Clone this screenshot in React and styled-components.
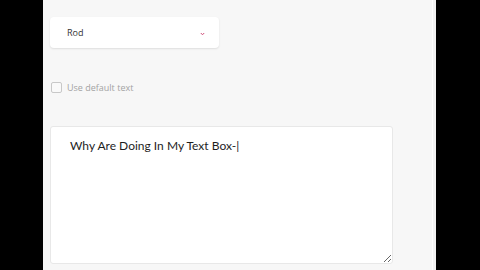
import React from "react";
import styled, { createGlobalStyle } from "styled-components";

const Global = createGlobalStyle`
  html, body { margin: 0; padding: 0; background: #000; }
  body { width: 480px; height: 270px; overflow: hidden; font-family: Lato, "Open Sans", sans-serif; }
`;

const Stage = styled.div`
  display: flex;
  height: 270px;
  padding-left: 43px;
`;

const Panel = styled.div`
  width: 390px;
  height: 270px;
  background: #f7f7f7;
  border-right: 1px solid #ffffff;
  box-shadow: 3px 0 0 #f3f3f3;
  padding: 17px 0 0 7px;
  box-sizing: border-box;
  display: flex;
  flex-direction: column;
`;

const Select = styled.div`
  width: 169px;
  height: 31px;
  box-sizing: border-box;
  background: #fff;
  border-radius: 4px;
  box-shadow: 0 1px 2px rgba(0, 0, 0, 0.1);
  display: flex;
  align-items: center;
  justify-content: space-between;
  padding: 0 14px 0 17px;
  font-family: "Open Sans", sans-serif;
  font-size: 9px;
  color: #333;
`;

const Chevron = styled.svg`
  width: 5px;
  height: 4px;
  margin-top: 2px;
`;

const CheckRow = styled.label`
  display: flex;
  align-items: center;
  gap: 5px;
  margin-top: 33px;
  margin-left: 1px;
  font-family: "Open Sans", sans-serif;
  font-size: 9px;
  color: #a3a3a3;
`;

const Box = styled.span`
  width: 9px;
  height: 9px;
  border: 1px solid #c8c8c8;
  border-radius: 2px;
  background: #f9f9f9;
`;

const TextArea = styled.textarea`
  margin-top: 32px;
  width: 343px;
  height: 138px;
  box-sizing: border-box;
  background: #fff;
  border: 1px solid #e8e8e8;
  border-radius: 3px;
  padding: 11px 19px;
  font-family: Lato, sans-serif;
  font-size: 12px;
  font-weight: 400;
  letter-spacing: 0;
  color: #1e1e1e;
  resize: vertical;
  outline: none;
`;

export default function App() {
  return (
    <>
      <Global />
      <Stage>
        <Panel>
          <Select>
            <span>Rod</span>
            <Chevron viewBox="0 0 5 4">
              <path d="M0.8 1 L2.5 2.8 L4.2 1" fill="none" stroke="#d0507a" strokeWidth="1" />
            </Chevron>
          </Select>
          <CheckRow>
            <Box />
            Use default text
          </CheckRow>
          <TextArea defaultValue="Why Are Doing In My Text Box-|" />
        </Panel>
      </Stage>
    </>
  );
}
